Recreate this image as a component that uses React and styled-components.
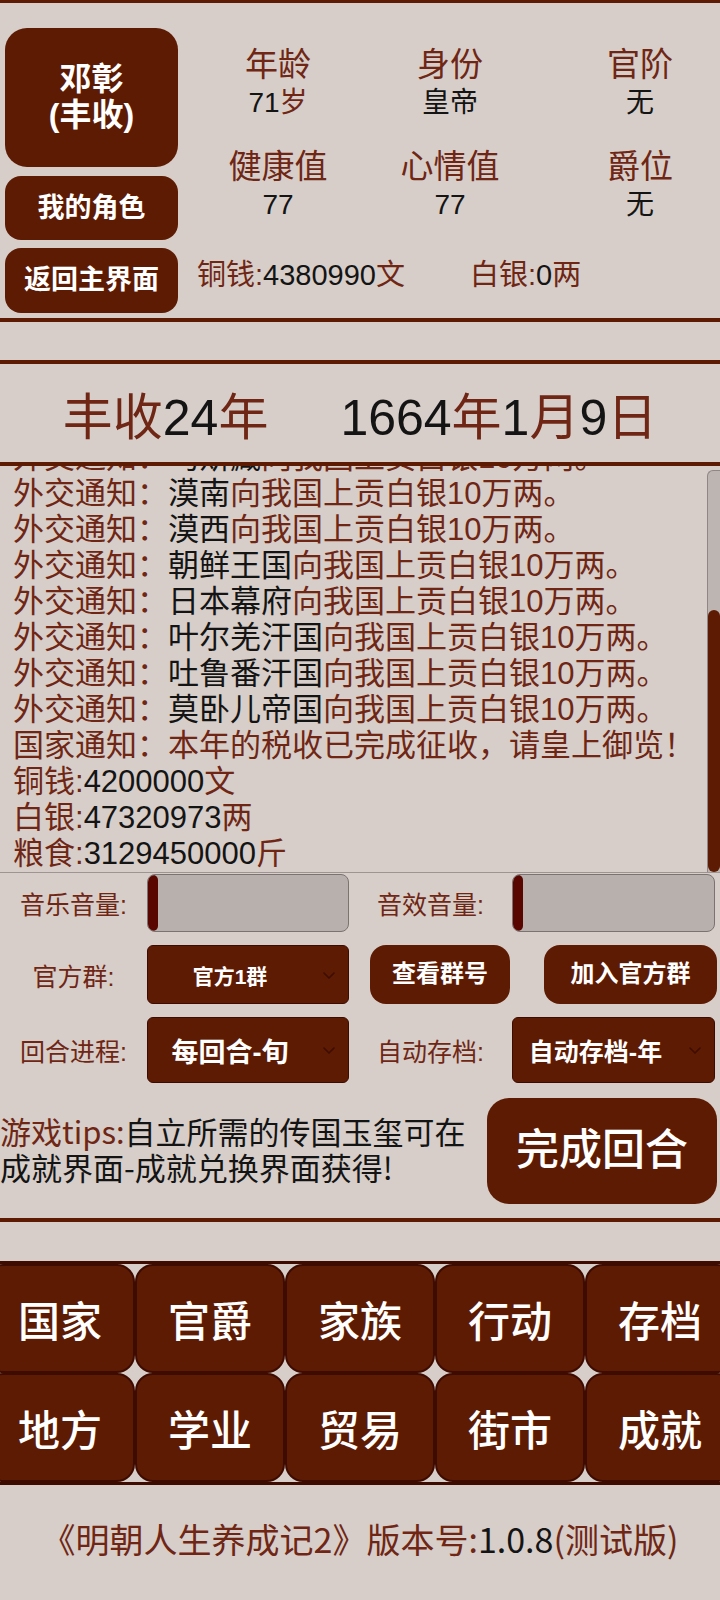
import React from "react";
import styled, { createGlobalStyle } from "styled-components";

const C = {
  bg: "#d7cec9",
  dark: "#5e1b03",
  darker: "#3e0b00",
  brown: "#6f2614",
  ink: "#141414",
};

const FONT = `"Liberation Sans", "Noto Sans CJK SC", sans-serif`;

const Global = createGlobalStyle`
  html, body { margin: 0; padding: 0; background: ${C.bg}; }
  body { font-family: ${FONT}; overflow-x: hidden; }
  #root { width: 720px; min-height: 1600px; overflow: hidden; }
`;

const Page = styled.div`
  width: 720px;
  min-height: 1600px;
  background: ${C.bg};
  border-top: 3px solid ${C.dark};
  box-sizing: border-box;
  display: flex;
  flex-direction: column;
`;

const B = styled.span`color: ${C.brown};`;
const K = styled.span`color: ${C.ink};`;

/* ---------- header ---------- */
const Header = styled.header`
  display: flex;
  padding: 25px 0 5px 5px;
  border-bottom: 4px solid ${C.dark};
`;

const LeftCol = styled.div`
  width: 173px;
  display: flex;
  flex-direction: column;
  gap: 8px;
  flex-shrink: 0;
`;

const DarkButton = styled.button`
  height: ${(p) => p.$h}px;
  border: none;
  border-radius: ${(p) => p.$r || 16}px;
  background: ${C.dark};
  color: #fff;
  font-family: ${FONT};
  font-size: ${(p) => p.$fs}px;
  font-weight: ${(p) => p.$fw || 700};
  line-height: ${(p) => p.$lh || 1.2};
  padding: 0;
  display: flex;
  align-items: center;
  justify-content: center;
  flex-direction: column;
  flex-shrink: 0;
  width: ${(p) => (p.$w ? `${p.$w}px` : "100%")};
`;

const RightCol = styled.div`
  flex: 1;
  padding-top: 18px;
`;

const StatGrid = styled.div`
  display: grid;
  grid-template-columns: 124px 220px 160px;
  row-gap: 26px;
  margin-left: 38px;
`;

const Stat = styled.div`
  display: flex;
  flex-direction: column;
  align-items: center;
`;

const StatLabel = styled.div`
  font-size: 33px;
  line-height: 38px;
  color: ${C.brown};
  white-space: nowrap;
`;

const StatValue = styled.div`
  font-size: 28px;
  line-height: 38px;
  color: ${C.ink};
  white-space: nowrap;
`;

const MoneyRow = styled.div`
  display: flex;
  margin-top: 32px;
  padding-left: 19px;
  font-size: 29px;
  line-height: 38px;
  white-space: nowrap;
`;

const Money = styled.div`
  width: ${(p) => (p.$w ? `${p.$w}px` : "auto")};
`;

/* ---------- date ---------- */
const DateBar = styled.div`
  margin-top: 38px;
  border-top: 4px solid ${C.dark};
  border-bottom: 4px solid ${C.dark};
  height: 98px;
  display: flex;
  align-items: center;
  justify-content: center;
  gap: 72px;
  font-size: 50px;
  white-space: nowrap;
`;

/* ---------- log ---------- */
const LogBox = styled.div`
  height: 406px;
  display: flex;
  border-bottom: 1px solid #9d9592;
`;

const LogText = styled.div`
  flex: 1;
  overflow: hidden;
  display: flex;
  flex-direction: column;
  justify-content: flex-end;
  padding-left: 13px;
`;

const LogLine = styled.div`
  flex-shrink: 0;
  font-size: 31px;
  line-height: 36px;
  white-space: nowrap;
  color: ${C.brown};
`;

const ScrollTrack = styled.div`
  width: 12px;
  flex-shrink: 0;
  margin-top: 4px;
  background: #bcb5b1;
  border-left: 1px solid #8e8783;
  border-top: 1px solid #8e8783;
  border-top-left-radius: 6px;
  display: flex;
  flex-direction: column;
  justify-content: flex-end;
`;

const ScrollThumb = styled.div`
  height: 262px;
  background: ${C.dark};
  border-radius: 6px;
`;

/* ---------- settings ---------- */
const Settings = styled.div`
  display: grid;
  grid-template-columns: 147px 202px 163px 203px;
  grid-template-rows: 58px 59px 66px;
  row-gap: 13px;
  padding-top: 1px;
  align-items: stretch;
`;

const Label = styled.div`
  display: flex;
  align-items: center;
  justify-content: center;
  font-size: 25px;
  color: ${C.brown};
  white-space: nowrap;
`;

const SliderTrack = styled.div`
  display: flex;
  background: #b8b0ac;
  border: 1px solid #7b7370;
  border-radius: 8px;
  overflow: hidden;
`;

const SliderThumb = styled.div`
  width: 10px;
  background: #5a0600;
  border-radius: 6px;
`;

const Select = styled.div`
  display: flex;
  align-items: center;
  background: ${C.dark};
  border: 1px solid ${C.darker};
  border-radius: 6px;
  color: #fff;
  font-weight: 700;
  font-size: ${(p) => p.$fs}px;
`;

const SelectText = styled.div`
  flex: 1;
  text-align: center;
  white-space: nowrap;
`;

const Chevron = styled.svg`
  width: 14px;
  height: 14px;
  margin: 0 12px 0 10px;
`;

const SmallButton = styled(DarkButton)`
  justify-self: end;
  margin-right: ${(p) => p.$mr}px;
  height: auto;
  align-self: stretch;
`;

/* ---------- tips ---------- */
const TipsRow = styled.div`
  display: flex;
  align-items: center;
  margin-top: 15px;
  padding: 0 3px 14px 0;
  border-bottom: 4px solid ${C.dark};
`;

const Tips = styled.div`
  flex: 1;
  font-family: "Noto Sans CJK SC", sans-serif;
  font-size: 31px;
  line-height: 36px;
  color: ${C.ink};
  white-space: nowrap;
  margin-top: -4px;
`;

/* ---------- nav ---------- */
const Nav = styled.nav`
  margin: 39px 0 0 -15px;
  width: 750px;
  display: grid;
  grid-template-columns: repeat(5, 150px);
  grid-auto-rows: 109px;
  border-top: 3px solid ${C.darker};
  border-bottom: 3px solid ${C.darker};
`;

const NavCell = styled.button`
  background: ${C.dark};
  border: 2px solid ${C.darker};
  border-radius: 18px;
  color: #fff;
  font-family: ${FONT};
  font-size: 42px;
  font-weight: 500;
  padding: 0;
`;

/* ---------- footer ---------- */
const Footer = styled.footer`
  flex: 1;
  padding-top: 34px;
  text-align: center;
  font-family: "Noto Sans CJK SC", sans-serif;
  font-size: 34px;
  line-height: 40px;
  color: ${C.brown};
  white-space: nowrap;
`;

const ChevronIcon = () => (
  <Chevron viewBox="0 0 14 14" fill="none">
    <path d="M2 5l5 5 5-5" stroke="#3e0d00" strokeWidth="1.6" strokeLinecap="round" strokeLinejoin="round" />
  </Chevron>
);

const tributes = [
  "瓦剌", "鞑靼", "哈密", "乌斯藏", "漠南", "漠西", "朝鲜王国", "日本幕府",
  "叶尔羌汗国", "吐鲁番汗国", "莫卧儿帝国",
];

export default function App() {
  return (
    <>
      <Global />
      <Page>
        <Header>
          <LeftCol>
            <DarkButton $h={139} $r={22} $fs={32} $lh={1.1} style={{ marginBottom: 1 }}>
              <span>邓彰</span>
              <span>(丰收)</span>
            </DarkButton>
            <DarkButton $h={64} $fs={27}>我的角色</DarkButton>
            <DarkButton $h={65} $fs={27}>返回主界面</DarkButton>
          </LeftCol>
          <RightCol>
            <StatGrid>
              <Stat><StatLabel>年龄</StatLabel><StatValue>71<B>岁</B></StatValue></Stat>
              <Stat><StatLabel>身份</StatLabel><StatValue>皇帝</StatValue></Stat>
              <Stat><StatLabel>官阶</StatLabel><StatValue>无</StatValue></Stat>
              <Stat><StatLabel>健康值</StatLabel><StatValue>77</StatValue></Stat>
              <Stat><StatLabel>心情值</StatLabel><StatValue>77</StatValue></Stat>
              <Stat><StatLabel>爵位</StatLabel><StatValue>无</StatValue></Stat>
            </StatGrid>
            <MoneyRow>
              <Money $w={273}><B>铜钱:</B><K>4380990</K><B>文</B></Money>
              <Money><B>白银:</B><K>0</K><B>两</B></Money>
            </MoneyRow>
          </RightCol>
        </Header>

        <DateBar>
          <span><B>丰收</B><K>24</K><B>年</B></span>
          <span><K>1664</K><B>年</B><K>1</K><B>月</B><K>9</K><B>日</B></span>
        </DateBar>

        <LogBox>
          <LogText>
            <LogLine>国家通知：新的一年开始了，请皇上勤政爱民！</LogLine>
            {tributes.map((t) => (
              <LogLine key={t}>
                外交通知：<K>{t}</K>向我国上贡白银10万两。
              </LogLine>
            ))}
            <LogLine>国家通知：本年的税收已完成征收，请皇上御览！</LogLine>
            <LogLine>铜钱:<K>4200000</K>文</LogLine>
            <LogLine>白银:<K>47320973</K>两</LogLine>
            <LogLine>粮食:<K>3129450000</K>斤</LogLine>
          </LogText>
          <ScrollTrack>
            <ScrollThumb />
          </ScrollTrack>
        </LogBox>

        <Settings>
          <Label>音乐音量:</Label>
          <SliderTrack><SliderThumb /></SliderTrack>
          <Label>音效音量:</Label>
          <SliderTrack><SliderThumb /></SliderTrack>

          <Label>官方群:</Label>
          <Select $fs={21}><SelectText>官方1群</SelectText><ChevronIcon /></Select>
          <SmallButton $w={140} $mr={2} $fs={24} $r={16}>查看群号</SmallButton>
          <SmallButton $w={173} $mr={-2} $fs={24} $r={16}>加入官方群</SmallButton>

          <Label>回合进程:</Label>
          <Select $fs={27}><SelectText>每回合-旬</SelectText><ChevronIcon /></Select>
          <Label>自动存档:</Label>
          <Select $fs={25}><SelectText>自动存档-年</SelectText><ChevronIcon /></Select>
        </Settings>

        <TipsRow>
          <Tips>
            <B>游戏tips:</B>自立所需的传国玉玺可在<br />成就界面-成就兑换界面获得!
          </Tips>
          <DarkButton $w={230} $h={106} $r={22} $fs={43} $fw={500}>
            完成回合
          </DarkButton>
        </TipsRow>

        <Nav>
          {["国家", "官爵", "家族", "行动", "存档", "地方", "学业", "贸易", "街市", "成就"].map((n) => (
            <NavCell key={n}>{n}</NavCell>
          ))}
        </Nav>

        <Footer>
          《明朝人生养成记2》版本号:<K>1.0.8</K>(测试版)
        </Footer>
      </Page>
    </>
  );
}
